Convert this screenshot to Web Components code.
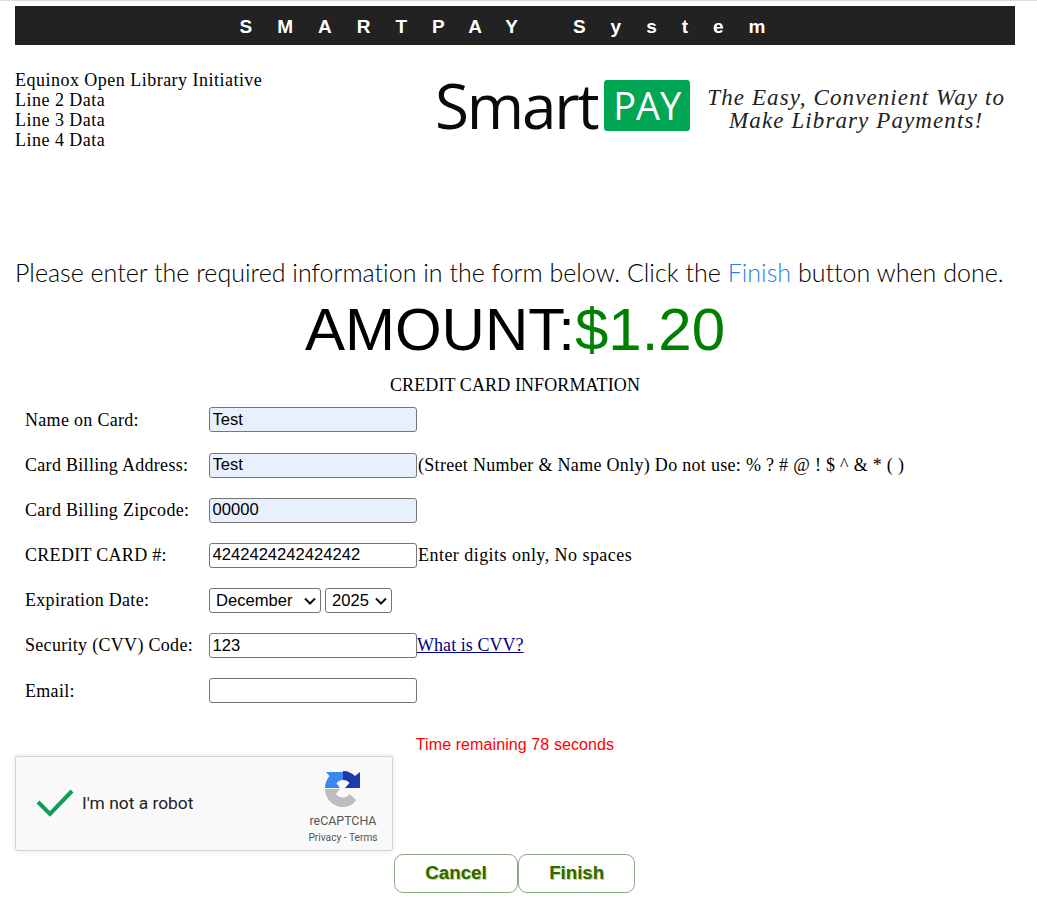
<!DOCTYPE html>
<html>
<head>
<meta charset="utf-8">
<title>SmartPAY</title>
<style>
html, body { margin: 0; padding: 0; background: #fff; }
body { border-top: 1px solid #ddd; font-family: "Liberation Serif", serif; font-size: 18px; color: #000; }
a { color: #000080; letter-spacing: .05px; }
</style>
</head>
<body>
<pay-page>
  <pay-banner>SMARTPAY System</pay-banner>
  <pay-top>
    <span>Equinox Open Library Initiative</span>
    <span>Line 2 Data</span>
    <span>Line 3 Data</span>
    <span>Line 4 Data</span>
  </pay-top>
  <pay-intro></pay-intro>
  <pay-amount value="$1.20"></pay-amount>
  <pay-form>
    <pay-row label="Name on Card:"><pay-input value="Test" filled></pay-input></pay-row>
    <pay-row label="Card Billing Address:"><pay-input value="Test" filled></pay-input><span>(Street Number &amp; Name Only) Do not use: % ? # @ ! $ ^ &amp; * ( )</span></pay-row>
    <pay-row label="Card Billing Zipcode:"><pay-input value="00000" filled></pay-input></pay-row>
    <pay-row label="CREDIT CARD #:"><pay-input value="4242424242424242"></pay-input><span style="letter-spacing:.46px">Enter digits only, No spaces</span></pay-row>
    <pay-row label="Expiration Date:"><pay-expiry></pay-expiry></pay-row>
    <pay-row label="Security (CVV) Code:"><pay-input value="123"></pay-input><a href="#">What is CVV?</a></pay-row>
    <pay-row label="Email:"><pay-input></pay-input></pay-row>
  </pay-form>
  <pay-timer seconds="78"></pay-timer>
  <pay-captcha></pay-captcha>
  <pay-actions>
    <pay-button>Cancel</pay-button>
    <pay-button>Finish</pay-button>
  </pay-actions>
</pay-page>
<script>
class PayPage extends HTMLElement {
  constructor() {
    super();
    this.attachShadow({mode: 'open'}).innerHTML = `
      <style>
        :host { display: block; width: 1000px; margin: 5px 0 0 15px; }
      </style>
      <slot></slot>`;
  }
}

class PayBanner extends HTMLElement {
  constructor() {
    super();
    this.attachShadow({mode: 'open'}).innerHTML = `
      <style>
        :host { display: block; height: 39px; background: #222; color: #fff; text-align: center;
                font: bold 19px/42px "Liberation Sans", Arial, sans-serif; letter-spacing: 25px; white-space: nowrap; }
      </style>
      <slot></slot>`;
  }
}

class PayTop extends HTMLElement {
  constructor() {
    super();
    this.attachShadow({mode: 'open'}).innerHTML = `
      <style>
        :host { display: flex; justify-content: space-between; height: 212px; }
        .lines { display: flex; flex-direction: column; padding-top: 25px; line-height: 20px; letter-spacing: .48px; }
        .logo { display: flex; align-items: center; align-self: flex-start; margin-top: 33px; width: 580px; height: 54px; }
        .smart { font: 500 62px/54px "Open Sans", sans-serif; letter-spacing: -2.2px; color: #0a0a0a; }
        .pay { background: #00a651; color: #fff; border-radius: 3px; font: 500 38px/51px "Open Sans", sans-serif; width: 86px; height: 51px; text-align: center; margin-left: 7px; }
        .tag { padding-top: 9px; font: italic 23px/22.5px "Liberation Serif", serif; letter-spacing: 1.1px; text-align: center; margin-left: 17px; color: #222; white-space: nowrap; }
      </style>
      <div class="lines"><slot></slot></div>
      <div class="logo">
        <span class="smart">Smart</span><span class="pay">PAY</span>
        <span class="tag">The Easy, Convenient Way to<br>Make Library Payments!</span>
      </div>`;
  }
}

class PayIntro extends HTMLElement {
  constructor() {
    super();
    this.attachShadow({mode: 'open'}).innerHTML = `
      <style>
        :host { display: block; font: 300 25px/30px Lato, sans-serif; letter-spacing: .02px; white-space: nowrap; }
        b { font-weight: 300; color: #2f7fe8; }
      </style>
      Please enter the required information in the form below. Click the <b>Finish</b> button when done.`;
  }
}

class PayAmount extends HTMLElement {
  constructor() {
    super();
    this.attachShadow({mode: 'open'}).innerHTML = `
      <style>
        :host { display: block; margin-top: 10px; text-align: center; }
        .amt { font: 60px/66px "Liberation Sans", Arial, sans-serif; }
        span { color: green; }
        .title { margin-top: 12px; line-height: 20px; letter-spacing: .1px; }
      </style>
      <div class="amt">AMOUNT:<span>${this.getAttribute('value')}</span></div>
      <div class="title">CREDIT CARD INFORMATION</div>`;
  }
}

class PayForm extends HTMLElement {
  constructor() {
    super();
    this.attachShadow({mode: 'open'}).innerHTML = `
      <style>
        :host { display: grid; grid-auto-rows: 45.15px; margin-top: 2.4px; }
      </style>
      <slot></slot>`;
  }
}

class PayRow extends HTMLElement {
  constructor() {
    super();
    this.attachShadow({mode: 'open'}).innerHTML = `
      <style>
        :host { display: grid; grid-template-columns: 184px 1fr; align-items: center; padding-left: 10px; letter-spacing: .3px; }
        .label { padding-top: .6px; }
        .ctl { display: flex; align-items: center; white-space: nowrap; }
        ::slotted(span) { margin-left: 1px; }
      </style>
      <div class="label">${this.getAttribute('label')}</div>
      <div class="ctl"><slot></slot></div>`;
  }
}

class PayInput extends HTMLElement {
  constructor() {
    super();
    this.attachShadow({mode: 'open'}).innerHTML = `
      <style>
        :host { display: block; }
        input { display: block; box-sizing: border-box; width: 208px; height: 25px; margin: 0; padding: 1px 2.5px;
                border: 1px solid #767676; border-radius: 3px; background: #fff; color: #000; outline: 0;
                font: 16.6px "Liberation Sans", Arial, sans-serif; letter-spacing: 0; }
        input.filled { background: #e8f0fe; }
      </style>
      <input class="${this.hasAttribute('filled') ? 'filled' : ''}" value="${this.getAttribute('value') || ''}">`;
  }
}

class PayExpiry extends HTMLElement {
  constructor() {
    super();
    const chevron = `<svg width="12" height="8" viewBox="0 0 12 8"><path d="M1 1.500 L6 6.500 L11 1.500" fill="none" stroke="#111" stroke-width="2"/></svg>`;
    this.attachShadow({mode: 'open'}).innerHTML = `
      <style>
        :host { display: flex; gap: 4px; }
        label { position: relative; display: block; }
        svg { position: absolute; right: 5px; top: 9px; pointer-events: none; }
        select { display: block; box-sizing: border-box; height: 25px; margin: 0; padding: 0 0 0 6px; appearance: none;
                 border: 1px solid #767676; border-radius: 3px; background: #fff; color: #000;
                 font: 16.6px "Liberation Sans", Arial, sans-serif; letter-spacing: 0; }
        .m { width: 112px; }
        .y { width: 67px; }
      </style>
      <label><select class="m"><option>December</option></select>${chevron}</label>
      <label><select class="y"><option>2025</option></select>${chevron}</label>`;
  }
}

class PayTimer extends HTMLElement {
  constructor() {
    super();
    this.attachShadow({mode: 'open'}).innerHTML = `
      <style>
        :host { display: block; margin-top: 22.6px; text-align: center; color: #f00; letter-spacing: .1px; font: 16px/18px "Liberation Sans", Arial, sans-serif; }
      </style>
      Time remaining ${this.getAttribute('seconds')} seconds`;
  }
}

class PayCaptcha extends HTMLElement {
  constructor() {
    super();
    this.attachShadow({mode: 'open'}).innerHTML = `
      <style>
        :host { display: flex; align-items: center; box-sizing: border-box; width: 378px; height: 95px; margin-top: 2px;
                background: #f9f9f9; border: 1px solid #d3d3d3; border-radius: 3px; box-shadow: 0 0 4px 1px rgba(0,0,0,.08);
                font-family: Roboto, sans-serif; color: #000; }
        .check { margin-left: 20px; flex: none; }
        .label { margin-left: 8px; font-size: 17.4px; color: #222; flex: 1; }
        .brand { display: flex; flex-direction: column; align-items: center; width: 72px; margin: 8px 13px 0 0; color: #555; }
        .brand svg { display: block; }
        .name { font-size: 12.4px; line-height: 14px; margin-top: 6px; }
        .links { font-size: 10.2px; line-height: 12px; margin-top: 4px; white-space: nowrap; }
      </style>
      <svg class="check" width="38" height="30" viewBox="0 0 38 30">
        <path d="M2 14 L14 26 L36 3" fill="none" stroke="#0f9d58" stroke-width="4"/>
      </svg>
      <div class="label">I'm not a robot</div>
      <div class="brand">
        <svg width="38" height="38" viewBox="0 0 38 38">
          <path fill="#1c3aa9" d="M19 1 C24 1 28 3 31 6 L36 2 V18 H21 L25.500 13 C24 11 22 10 19 10 Z"/>
          <path fill="#3b86f0" d="M1 18 C1 13 3 9 5.500 6 L2 2 H19 V10 C16 10 14 11.500 12.500 13.500 L16 18 Z"/>
          <path fill="#bdbdbd" d="M1 19 H16 L12 24 C13.500 26 16 27.500 19 27.500 C22 27.500 24 26 25.500 24 L32 30 C29 35 24 37 19 37 C9 37 1 29 1 19 Z"/>
        </svg>
        <div class="name">reCAPTCHA</div>
        <div class="links">Privacy - Terms</div>
      </div>`;
  }
}

class PayActions extends HTMLElement {
  constructor() {
    super();
    this.attachShadow({mode: 'open'}).innerHTML = `
      <style>
        :host { display: flex; justify-content: center; margin-top: 3px; padding-right: 1px; }
      </style>
      <slot></slot>`;
  }
}

class PayButton extends HTMLElement {
  constructor() {
    super();
    this.attachShadow({mode: 'open'}).innerHTML = `
      <style>
        :host { display: block; box-sizing: border-box; height: 39px; padding: 0 30.5px; background: #fff;
                border: 1px solid #8fa98a; border-radius: 9px; color: #336600; text-shadow: 1px 1px 1px #a3d07e;
                font: bold 18.7px/35px "Liberation Sans", Arial, sans-serif; }
        :host(:last-child) { padding: 0 30px; }
      </style>
      <slot></slot>`;
  }
}

customElements.define('pay-page', PayPage);
customElements.define('pay-banner', PayBanner);
customElements.define('pay-top', PayTop);
customElements.define('pay-intro', PayIntro);
customElements.define('pay-amount', PayAmount);
customElements.define('pay-form', PayForm);
customElements.define('pay-row', PayRow);
customElements.define('pay-input', PayInput);
customElements.define('pay-expiry', PayExpiry);
customElements.define('pay-timer', PayTimer);
customElements.define('pay-captcha', PayCaptcha);
customElements.define('pay-actions', PayActions);
customElements.define('pay-button', PayButton);
</script>
</body>
</html>
